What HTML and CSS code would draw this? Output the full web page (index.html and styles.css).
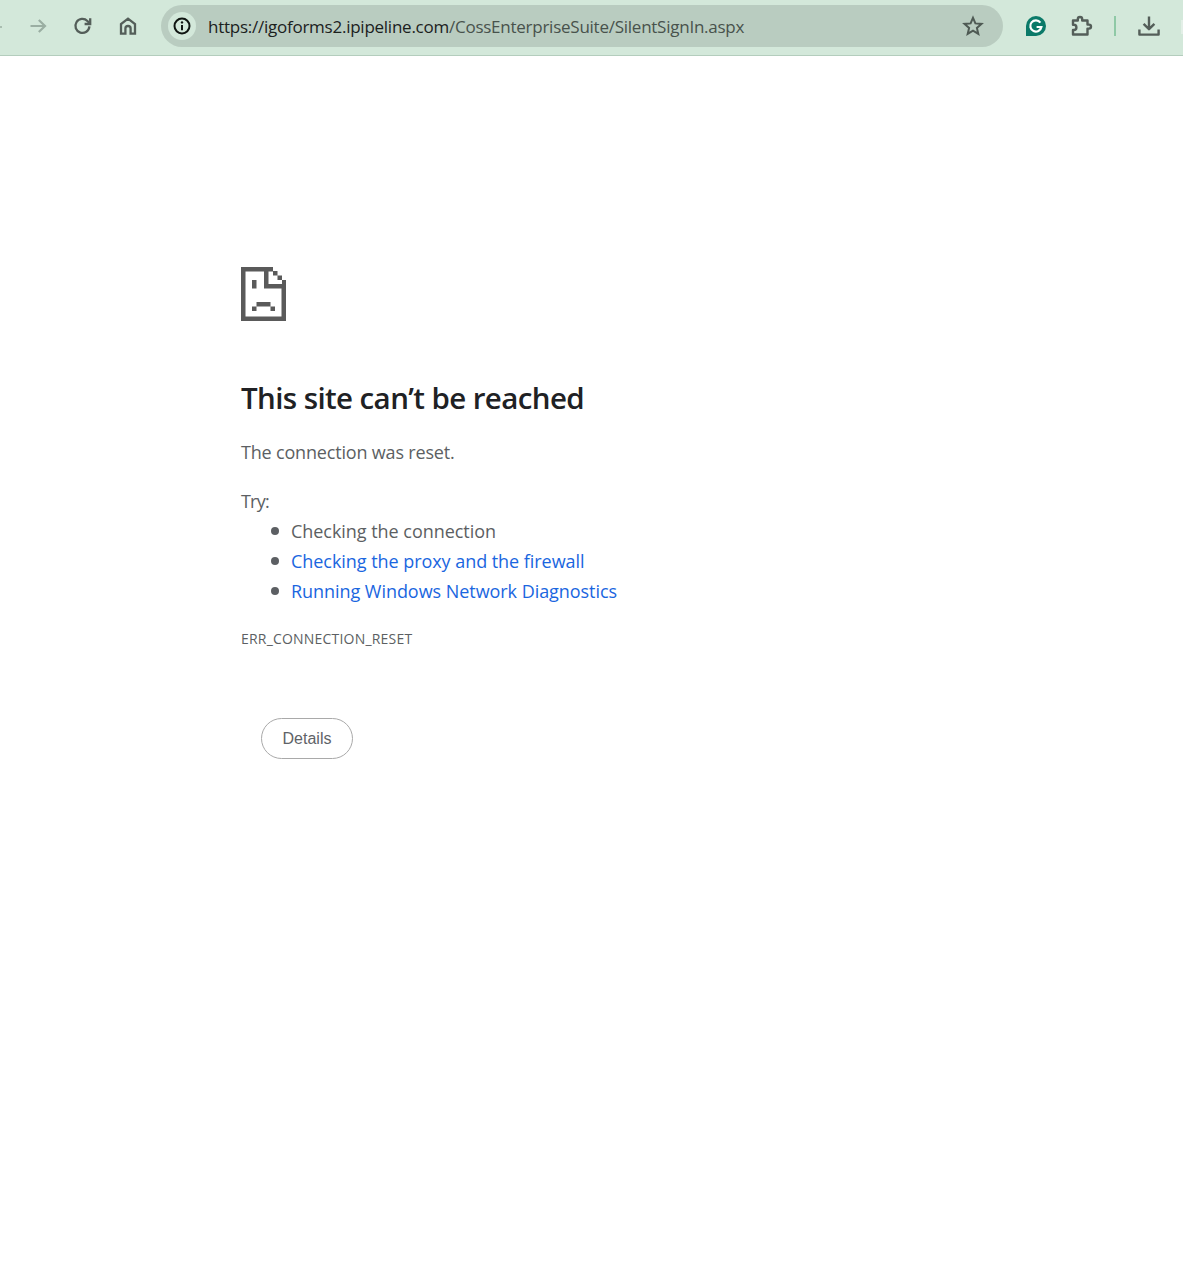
FILE: index.html
```html
<!DOCTYPE html>
<html lang="en">
<head>
<meta charset="utf-8">
<title>igoforms2.ipipeline.com</title>
<link rel="stylesheet" href="styles.css">
</head>
<body>
<header class="toolbar">
  <div class="nav">
    <span class="sliver-left"></span>
    <button class="tool" aria-label="Forward">
      <svg width="20" height="20" viewBox="0 0 20 20"><path d="M2.5 10H17M10.8 4L17 10L10.8 16" class="stroke-faint"/></svg>
    </button>
    <button class="tool" aria-label="Reload">
      <svg width="20" height="20" viewBox="0 0 20 20"><path d="M16.4 10.4A7 7 0 1 1 14.4 5L16.4 7" class="stroke"/><path d="M17.2 2.2V8H11.6" class="stroke"/></svg>
    </button>
    <button class="tool" aria-label="Home">
      <svg width="20" height="20" viewBox="0 0 20 20"><path d="M3 17.6V8L10 2.6L17 8V17.6H12.6V12.6A2.6 2.6 0 0 0 7.4 12.6V17.6Z" class="stroke"/></svg>
    </button>
  </div>
  <div class="omnibox">
    <span class="site-info">
      <svg width="20" height="20" viewBox="0 0 20 20"><circle cx="10" cy="10" r="7.5" class="stroke-dark"/><path d="M10 9V14.2" class="stroke-dark"/><circle cx="10" cy="6.4" r="1.2" class="fill-dark"/></svg>
    </span>
    <span class="url"><span class="url-host">https://igoforms2.ipipeline.com</span>/CossEnterpriseSuite/SilentSignIn.aspx</span>
    <svg class="star" width="22" height="22" viewBox="0 0 22 22"><path d="M11 2.8L13.4 8.4L19.5 8.9L14.9 12.9L16.3 18.9L11 15.7L5.7 18.9L7.1 12.9L2.5 8.9L8.6 8.4Z" class="stroke-star"/></svg>
  </div>
  <div class="actions">
    <svg class="grammarly" width="22" height="22" viewBox="0 0 22 22"><path d="M11 1A10 10 0 0 1 11 21H1V11A10 10 0 0 1 11 1Z" class="fill-green"/><path d="M15.4 7.6A5.6 5.6 0 1 0 16.4 12H11.6" class="stroke-white"/></svg>
    <svg class="puzzle" width="24" height="24" viewBox="0 0 24 24"><path d="M4 6.5H8.8V5.2A2.2 2.2 0 0 1 13.2 5.2V6.5H18.5V10.6H20A2 2 0 0 1 20 14.6H18.5V20.5H4V16H4.8A2.6 2.6 0 0 0 4.8 10.8H4Z" class="stroke-thick"/></svg>
    <span class="separator"></span>
    <svg class="download" width="24" height="24" viewBox="0 0 24 24"><path d="M12 2.5V15M6.6 9.8L12 15.2L17.4 9.8" class="stroke-thick"/><path d="M2.4 15.5V20.6H21.6V15.5" class="stroke-thick"/></svg>
  </div>
  <span class="sliver-right"></span>
</header>

<main class="error">
  <svg class="sad-icon" width="45" height="54" viewBox="0 0 45 54">
    <path class="pixel" d="M0 0H32V4.5H4.5V49.5H40.5V17H45V54H0Z"/>
    <path class="pixel" d="M23 4H27.5V17H41V21.5H23Z"/>
    <path class="pixel" d="M32 4H36.5V8.5H32ZM36.5 8.5H41V13H36.5ZM41 13H45V17H41Z"/>
    <path class="pixel" d="M11 13H15.5V21.5H11ZM15.5 35H29.5V39.5H15.5ZM11 39.5H15.5V44H11ZM29.5 39.5H34V44H29.5Z"/>
  </svg>
  <h1 class="title">This site can’t be reached</h1>
  <p class="summary">The connection was reset.</p>
  <p class="try">Try:</p>
  <ul class="suggestions">
    <li>Checking the connection</li>
    <li><a href="#">Checking the proxy and the firewall</a></li>
    <li><a href="#">Running Windows Network Diagnostics</a></li>
  </ul>
  <p class="code">ERR_CONNECTION_RESET</p>
  <button class="details">Details</button>
</main>
</body>
</html>
```
FILE: styles.css
```css
* { box-sizing: border-box; }
html, body { margin: 0; padding: 0; background: #fff; }
body { height: 1266px; overflow: hidden; font-family: "Open Sans", "Noto Sans", sans-serif; }

.toolbar {
  position: relative;
  display: flex;
  align-items: center;
  height: 56px;
  padding: 0 0 3px 18px;
  background: #d3e8da;
  border-bottom: 1px solid #b4cdbd;
}
.nav { display: flex; align-items: center; gap: 5px; width: 143px; }
.tool {
  display: flex;
  align-items: center;
  justify-content: center;
  width: 40px;
  height: 40px;
  padding: 0;
  border: 0;
  background: transparent;
}
.sliver-left { position: absolute; left: 0; top: 26px; width: 2px; height: 2px; background: #a9bdb0; }
.sliver-right { position: absolute; right: 0; top: 20px; width: 2px; height: 14px; background: #e3efe7; }

.stroke, .stroke-faint, .stroke-dark, .stroke-white, .stroke-thick, .stroke-star { fill: none; stroke-width: 2; }
.stroke { stroke: #545e59; stroke-width: 2.3; }
.stroke-thick { stroke: #545e59; stroke-width: 2.4; stroke-linejoin: round; }
.stroke-star { stroke: #4f5a54; }
.stroke-faint { stroke: #9aaea2; stroke-width: 2.2; }
.stroke-dark { stroke: #101512; }
.stroke-white { stroke: #fff; stroke-width: 2.2; }
.fill-dark { fill: #101512; }
.fill-green { fill: #0b7a69; }

.omnibox {
  display: flex;
  align-items: center;
  width: 842px;
  height: 42px;
  padding: 0 19px 0 7px;
  border-radius: 21px;
  background: #b9ccc0;
}
.site-info {
  display: flex;
  align-items: center;
  justify-content: center;
  width: 28px;
  height: 28px;
  border-radius: 50%;
  background: #d3e8da;
}
.url {
  flex: 1;
  margin-left: 12px;
  font-size: 17px;
  letter-spacing: -0.25px;
  color: #48524c;
  white-space: nowrap;
}
.url-host { color: #1b211d; }
.star { flex: none; }

.actions { display: flex; align-items: center; margin-left: 22px; }
.grammarly { margin-right: 22px; }
.puzzle { margin-right: 21px; }
.separator { width: 2px; height: 20px; margin-right: 21px; background: #8fc9a6; }

.error { padding: 211px 0 0 241px; color: #5c5f63; }
.sad-icon { display: block; }
.pixel { fill: #5a5a5a; }
.title {
  margin: 57px 0 0;
  font-size: 29.5px;
  line-height: 40px;
  font-weight: 600;
  letter-spacing: -0.6px;
  color: #202124;
}
.summary, .try, .suggestions, .code { font-size: 18px; }
.summary { margin: 19px 0 0; line-height: 30px; letter-spacing: -0.18px; }
.try { margin: 19px 0 0; line-height: 30px; letter-spacing: -0.8px; }
.suggestions { margin: 0; padding: 0 0 0 30px; letter-spacing: -0.04px; list-style: none; }
.suggestions li { display: flex; align-items: center; height: 30px; }
.suggestions li::before {
  content: "";
  flex: none;
  width: 8px;
  height: 8px;
  margin-right: 12px;
  border-radius: 50%;
  background: #5c5f63;
}
.suggestions a { color: #1a66e0; text-decoration: none; letter-spacing: -0.05px; }
.code { margin: 24px 0 0; font-size: 14px; line-height: 18px; letter-spacing: 0.2px; }
.details {
  display: block;
  width: 92px;
  height: 41px;
  margin: 70px 0 0 20px;
  padding: 0;
  border: 1px solid #a9a9a9;
  border-radius: 21px;
  background: #fff;
  color: #5f6368;
  font-family: "Liberation Sans", Arial, sans-serif;
  font-size: 16px;
}
```
